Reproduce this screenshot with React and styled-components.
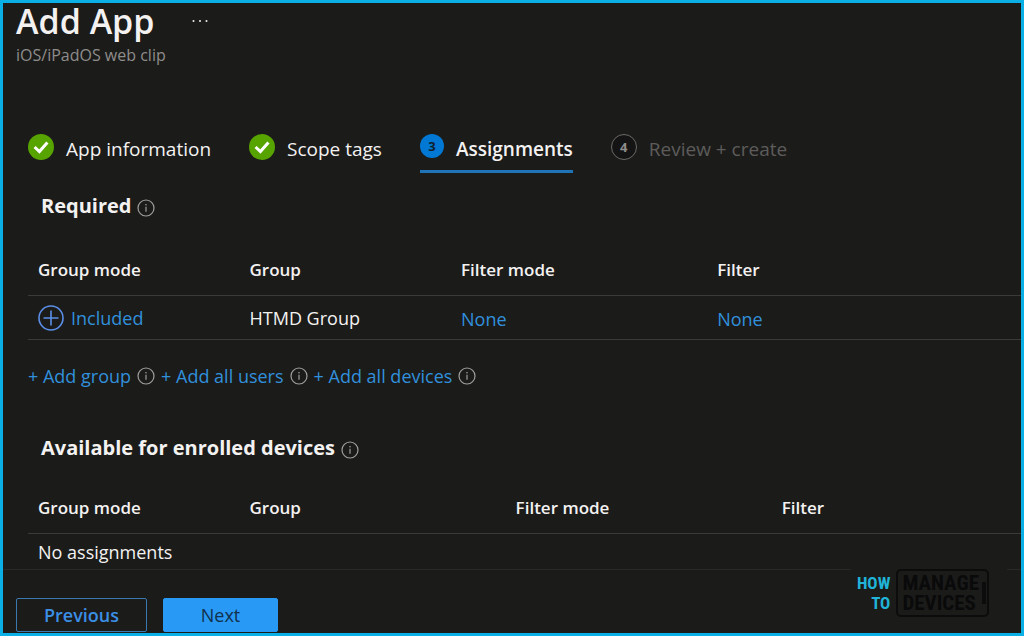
import React from 'react';
import styled, { createGlobalStyle, ThemeProvider } from 'styled-components';

const theme = {
  colors: {
    bg: '#1b1b1a',
    frame: '#0aafe6',
    text: '#f3f2f1',
    muted: '#8f8d8b',
    disabled: '#5d5c5a',
    link: '#3190dc',
    line: '#3a3a38',
    footerLine: '#292928',
    primary: '#2899f5',
  },
};

const GlobalStyle = createGlobalStyle`
  *, *::before, *::after {
    box-sizing: border-box;
  }

  body {
    margin: 0;
    background-color: ${theme.colors.bg};
    font-family: 'Open Sans', 'Noto Sans', sans-serif;
  }

  button {
    font-family: inherit;
    cursor: pointer;
  }
`;

const Page = styled.div`
  display: flex;
  flex-direction: column;
  min-height: 100vh;
  border: 3px solid ${props => props.theme.colors.frame};
  color: ${props => props.theme.colors.text};
  font-size: 18px;
`;

const Header = styled.header`
  padding-left: 13px;
`;

const TitleRow = styled.div`
  display: flex;
  align-items: center;
  gap: 36px;
`;

const Title = styled.h1`
  margin: 0;
  font-size: 34px;
  font-weight: 600;
  line-height: 36px;
`;

const MoreButton = styled.button`
  display: flex;
  padding: 0;
  border: 0;
  background: none;
  color: ${props => props.theme.colors.text};
`;

const Subtitle = styled.p`
  margin: 6px 0 0;
  color: ${props => props.theme.colors.muted};
  font-size: 16px;
  line-height: 20px;
`;

const Steps = styled.nav`
  display: flex;
  gap: 38px;
  margin-top: 69px;
  padding-left: 25px;
`;

const stepColor = ({ $state, theme: t }) =>
  $state === 'todo' ? t.colors.disabled : t.colors.text;

const Step = styled.button`
  display: flex;
  align-items: flex-start;
  gap: 12px;
  padding: 0 0 6px;
  border: 0;
  border-bottom: 3px solid ${props => (props.$state === 'current' ? '#1f74b8' : 'transparent')};
  background: none;
  color: ${stepColor};
  font-size: 19px;
  font-weight: ${props => (props.$state === 'current' ? 600 : 400)};
  line-height: 30px;
  white-space: nowrap;
`;

const badgeColors = {
  done: '#57a300',
  current: '#0078d4',
  todo: '#141414',
};

const Badge = styled.span`
  display: flex;
  align-items: center;
  justify-content: center;
  width: ${props => (props.$state === 'current' ? 24 : 26)}px;
  height: ${props => (props.$state === 'current' ? 24 : 26)}px;
  border: ${props => (props.$state === 'todo' ? '1px solid #6b6a68' : '0')};
  border-radius: 50%;
  background-color: ${props => badgeColors[props.$state]};
  color: ${props => (props.$state === 'current' ? '#10202e' : '#8f8d8b')};
  font-size: 13px;
  font-weight: 700;
  line-height: 24px;
`;

const Content = styled.main`
  padding-left: 25px;
`;

const SectionTitle = styled.div`
  display: flex;
  align-items: flex-end;
  gap: 6px;
  margin-top: ${props => (props.$first ? 20 : 47)}px;
  padding-left: 13px;
`;

const Heading = styled.h2`
  margin: 0;
  padding-top: 2px;
  font-size: 20px;
  font-weight: 700;
  line-height: 22px;
`;

const Table = styled.table`
  width: 100%;
  margin-top: ${props => (props.$compact ? 24 : 28)}px;
  border-collapse: separate;
  border-spacing: 0;
  table-layout: fixed;
`;

const HeadCell = styled.th`
  width: ${props => props.$width};
  height: 51px;
  padding: 0 0 0 10px;
  border-bottom: 1px solid ${props => props.theme.colors.line};
  font-size: 17px;
  font-weight: 600;
  line-height: 24px;
  text-align: left;
`;

const Cell = styled.td`
  height: ${props => (props.$last ? 35 : 44)}px;
  padding: 0 0 0 10px;
  border-bottom: ${props => (props.$last ? '0' : `1px solid ${props.theme.colors.line}`)};
  font-size: 18px;
  line-height: 24px;
`;

const Link = styled.a`
  display: inline-flex;
  align-items: center;
  gap: 7px;
  color: ${props => props.theme.colors.link};
  text-decoration: none;
  vertical-align: middle;
  white-space: nowrap;
`;

const AddLinks = styled.div`
  display: flex;
  align-items: center;
  gap: 6px;
  margin-top: 24px;
  line-height: 24px;
`;

const Footer = styled.footer`
  position: relative;
  display: flex;
  flex: 1;
  align-items: flex-start;
  gap: 16px;
  padding: 28px 13px 0;
  border-top: 1px solid ${props => props.theme.colors.footerLine};
`;

const Button = styled.button`
  min-width: ${props => (props.$primary ? 115 : 131)}px;
  height: 34px;
  padding: 0 24px;
  border: 1px solid ${props => (props.$primary ? props.theme.colors.primary : '#3a78b0')};
  border-radius: 2px;
  background-color: ${props => (props.$primary ? props.theme.colors.primary : 'transparent')};
  color: ${props => (props.$primary ? '#12304c' : '#3b8fe6')};
  font-size: 18px;
  font-weight: ${props => (props.$primary ? 500 : 600)};
  line-height: 24px;
`;

const Watermark = styled.div`
  position: absolute;
  right: 14px;
  bottom: 10px;
  display: flex;
  align-items: center;
  gap: 6px;
  padding: 6px 18px 6px 6px;
  background-color: ${props => props.theme.colors.bg};
  font-family: 'Roboto Condensed', Roboto, sans-serif;
  font-weight: 700;
  line-height: 20px;
`;

const MarkLead = styled.div`
  color: #1fb4d8;
  font-size: 17px;
  text-align: right;
`;

const MarkBox = styled.div`
  display: flex;
  align-items: center;
  gap: 3px;
  padding: 2px 1px 2px 4px;
  border: 2px solid #0c0c0c;
  border-radius: 5px;
  color: #0a0a0a;
  font-size: 21px;
`;

const MarkBar = styled.span`
  width: 4px;
  height: 22px;
  background-color: #0c0c0c;
`;

const InfoIcon = () => (
  <svg width="18" height="18" viewBox="0 0 18 18" fill="none" role="img" aria-label="More info">
    <circle cx="9" cy="9" r="8" stroke="#a19f9d" strokeWidth="1.2" />
    <path d="M9 7.8v5" stroke="#a19f9d" strokeWidth="1.2" />
    <circle cx="9" cy="5.7" r="0.8" fill="#a19f9d" />
  </svg>
);

const CheckIcon = () => (
  <svg width="26" height="26" viewBox="0 0 26 26" fill="none">
    <path d="M6.6 13l4.8 4.6 8-9.2" stroke="#fff" strokeWidth="3" />
  </svg>
);

const PlusCircleIcon = () => (
  <svg width="26" height="26" viewBox="0 0 26 26" fill="none" stroke="#5b8fe8" strokeWidth="1.6">
    <circle cx="13" cy="13" r="12" />
    <path d="M13 5.5v15M5.5 13h15" />
  </svg>
);

const steps = [
  { label: 'App information', state: 'done' },
  { label: 'Scope tags', state: 'done' },
  { label: 'Assignments', state: 'current' },
  { label: 'Review + create', state: 'todo' },
];

const HeadRow = ({ widths }) => (
  <thead>
    <tr>
      {['Group mode', 'Group', 'Filter mode', 'Filter'].map((label, i) => (
        <HeadCell key={label} scope="col" $width={widths[i]}>
          {label}
        </HeadCell>
      ))}
    </tr>
  </thead>
);

const App = () => (
  <ThemeProvider theme={theme}>
    <GlobalStyle />
    <Page>
      <Header>
        <TitleRow>
          <Title>Add App</Title>
          <MoreButton type="button" aria-label="More actions">
            <svg width="20" height="6" viewBox="0 0 20 6" fill="currentColor">
              <circle cx="3.5" cy="3" r="1" />
              <circle cx="10" cy="3" r="1" />
              <circle cx="16.5" cy="3" r="1" />
            </svg>
          </MoreButton>
        </TitleRow>
        <Subtitle>iOS/iPadOS web clip</Subtitle>
      </Header>

      <Steps>
        {steps.map(({ label, state }, i) => (
          <Step key={label} type="button" $state={state}>
            <Badge $state={state}>{state === 'done' ? <CheckIcon /> : i + 1}</Badge>
            {label}
          </Step>
        ))}
      </Steps>

      <Content>
        <SectionTitle $first>
          <Heading>Required</Heading>
          <InfoIcon />
        </SectionTitle>
        <Table>
          <HeadRow widths={['21.3%', '21.3%', '25.8%', 'auto']} />
          <tbody>
            <tr>
              <Cell>
                <Link href="#included">
                  <PlusCircleIcon />
                  Included
                </Link>
              </Cell>
              <Cell>HTMD Group</Cell>
              <Cell>
                <Link href="#filter-mode">None</Link>
              </Cell>
              <Cell>
                <Link href="#filter">None</Link>
              </Cell>
            </tr>
          </tbody>
        </Table>
        <AddLinks>
          <Link href="#add-group">+ Add group</Link>
          <InfoIcon />
          <Link href="#add-all-users">+ Add all users</Link>
          <InfoIcon />
          <Link href="#add-all-devices">+ Add all devices</Link>
          <InfoIcon />
        </AddLinks>

        <SectionTitle>
          <Heading>Available for enrolled devices</Heading>
          <InfoIcon />
        </SectionTitle>
        <Table $compact>
          <HeadRow widths={['21.3%', '26.8%', '26.8%', 'auto']} />
          <tbody>
            <tr>
              <Cell colSpan={4} $last>
                No assignments
              </Cell>
            </tr>
          </tbody>
        </Table>
      </Content>

      <Footer>
        <Button type="button">Previous</Button>
        <Button type="button" $primary>
          Next
        </Button>
        <Watermark>
          <MarkLead>
            <div>HOW</div>
            <div>TO</div>
          </MarkLead>
          <MarkBox>
            <div>
              <div>MANAGE</div>
              <div>DEVICES</div>
            </div>
            <MarkBar />
          </MarkBox>
        </Watermark>
      </Footer>
    </Page>
  </ThemeProvider>
);

export default App;
